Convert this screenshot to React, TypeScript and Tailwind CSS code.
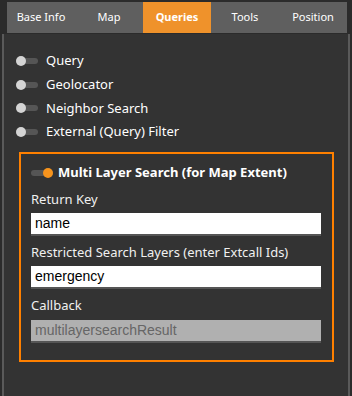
import React from "react";

const tabs = ["Base Info", "Map", "Queries", "Tools", "Position"];
const toggles = ["Query", "Geolocator", "Neighbor Search", "External (Query) Filter"];

function Toggle({ on }: { on?: boolean }) {
  return (
    <div className="relative w-[22px] h-[10px] flex items-center shrink-0">
      <div className="w-[22px] h-[6px] rounded-full bg-[#555555]" />
      <div
        className={
          on
            ? "absolute right-0 top-0 w-[10px] h-[10px] rounded-full bg-[#f7941d]"
            : "absolute left-0 top-0 w-[10px] h-[10px] rounded-full bg-[#d4d4d4]"
        }
      />
    </div>
  );
}

function Field({ value, disabled }: { value: string; disabled?: boolean }) {
  return (
    <div
      className={
        disabled
          ? "h-[23px] w-[290px] bg-[#b0b0b0] border-b-2 border-[#555555] flex items-center px-[4px] text-[14px] text-[#666666]"
          : "h-[23px] w-[290px] bg-white border-b-2 border-[#555555] flex items-center px-[4px] text-[14px] text-black"
      }
      style={{ fontFamily: "'Liberation Sans', Arial, sans-serif" }}
    >
      {value}
    </div>
  );
}

export default function App() {
  return (
    <div
      className="w-[352px] h-[396px] bg-[#2b2b2b] pt-[2px] flex flex-col overflow-hidden"
      style={{ fontFamily: "'Noto Sans', 'Open Sans', sans-serif" }}
    >
      <div className="ml-[7px] w-[340px] h-[31px] flex bg-[#5f5f5f] shrink-0">
        {tabs.map((t) => (
          <div
            key={t}
            className={
              t === "Queries"
                ? "w-[68px] h-full flex items-center justify-center bg-[#ef922b] text-white text-[11px] font-bold"
                : "w-[68px] h-full flex items-center justify-center text-white text-[11px]"
            }
          >
            {t}
          </div>
        ))}
      </div>
      <div className="mt-[1px] ml-[2px] w-[348px] flex-1 bg-[#333333] border-x-2 border-[#5a5a5a] pt-[15px]">
        <div className="flex flex-col pl-[12px]">
          {toggles.map((t) => (
            <div key={t} className="flex items-center gap-[8px] h-[23.7px]">
              <Toggle />
              <span className="text-[13px] text-white leading-none">{t}</span>
            </div>
          ))}
        </div>
        <div className="mt-[8px] ml-[15px] w-[315px] h-[210px] border-2 border-[#ff8000] px-[10px] pt-[11px]">
          <div className="flex items-center gap-[5px] h-[16px]">
            <Toggle on />
            <span className="text-[13px] font-bold text-white leading-none">
              Multi Layer Search (for Map Extent)
            </span>
          </div>
          <div className="mt-[9px] text-[13px] text-[#f0f0f0] leading-[18px]">Return Key</div>
          <div className="mt-[5px]">
            <Field value="name" />
          </div>
          <div className="mt-[7px] text-[13px] text-[#f0f0f0] leading-[18px]">
            Restricted Search Layers (enter Extcall Ids)
          </div>
          <div className="mt-[5px]">
            <Field value="emergency" />
          </div>
          <div className="mt-[7px] text-[13px] text-[#f0f0f0] leading-[18px]">Callback</div>
          <div className="mt-[6px]">
            <Field value="multilayersearchResult" disabled />
          </div>
        </div>
      </div>
    </div>
  );
}
